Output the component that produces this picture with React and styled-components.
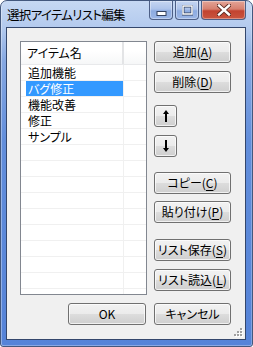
import React from 'react'
import styled, { createGlobalStyle } from 'styled-components'

const GlobalStyle = createGlobalStyle`
  html, body {
    margin: 0;
    padding: 0;
    background: #ffffff;
  }
  body {
    font-family: "Noto Sans CJK JP", "Liberation Sans", sans-serif;
    font-feature-settings: "palt";
  }
`

const Window = styled.div`
  box-sizing: border-box;
  width: 253px;
  height: 347px;
  display: flex;
  flex-direction: column;
  padding: 0 6px 6px 5px;
  border: 1px solid #43587e;
  border-radius: 7px 7px 3px 3px;
  background: linear-gradient(to bottom, #c6d8f3 0px, #b3caee 27px, #86a8e2 60px, #628edb 140px, #5583d8 100%);
  box-shadow: inset 1px 0 0 rgba(255,255,255,.35), inset -1px 0 0 rgba(255,255,255,.25), inset 0 -1px 0 rgba(255,255,255,.3);
  overflow: hidden;
`

const TitleBar = styled.div`
  height: 27px;
  display: flex;
  align-items: flex-start;
  justify-content: space-between;
`

const Title = styled.div`
  padding: 5px 0 0 1px;
  font-size: 12.5px;
  letter-spacing: -0.7px;
  line-height: 17px;
  color: #000;
  white-space: nowrap;
`

const Caption = styled.div`
  display: flex;
  align-items: flex-start;
  gap: 2px;
`

const CapButton = styled.div`
  box-sizing: border-box;
  width: ${p => p.$w}px;
  height: 19px;
  display: flex;
  align-items: center;
  justify-content: center;
  border: 1px solid #4d5f86;
  border-top: none;
  border-radius: 0 0 4px 4px;
  background: ${p => p.$close
    ? 'linear-gradient(to bottom, #e3a497 0%, #d6806f 45%, #c24330 55%, #c9553f 100%)'
    : 'linear-gradient(to bottom, #c6d6f1 0%, #adc3ea 45%, #8dabe0 55%, #9bb6e6 100%)'};
  box-shadow: inset 0 0 0 1px rgba(255,255,255,.35);
`

const Client = styled.div`
  position: relative;
  flex: 1;
  box-sizing: border-box;
  border: 1px solid #34476c;
  background: #f0f0f0;
  padding: 13px 14px 14px 13px;
  display: flex;
  flex-direction: column;
  gap: 8px;
`

const Main = styled.div`
  display: flex;
  gap: 7px;
  height: 254px;
`

const ListView = styled.div`
  box-sizing: border-box;
  width: 127px;
  height: 100%;
  border: 1px solid #828790;
  background: #fff;
  overflow: hidden;
`

const Header = styled.div`
  box-sizing: border-box;
  height: 23px;
  display: flex;
  background: linear-gradient(to bottom, #ffffff 0%, #ffffff 40%, #f6f7f8 100%);
  border-bottom: 1px solid #e8e9eb;
`

const HeadCell = styled.div`
  box-sizing: border-box;
  width: ${p => p.$w ? `${p.$w}px` : 'auto'};
  flex: ${p => p.$w ? 'none' : 1};
  padding-left: 6px;
  font-size: 12px;
  line-height: 22px;
  color: #000;
  border-right: ${p => p.$w ? '2px solid #e3e4e6' : 'none'};
`

const Row = styled.div`
  box-sizing: border-box;
  height: 16px;
  display: flex;
  border-bottom: 1px solid #f0f0f0;
`

const Cell = styled.div`
  box-sizing: border-box;
  width: 103px;
  padding-left: 5px;
  border-right: 1px solid #f0f0f0;
`

const Label = styled.div`
  height: 15px;
  padding-left: 2px;
  font-size: 12px;
  line-height: 15px;
  white-space: nowrap;
  overflow: hidden;
  color: ${p => p.$selected ? '#fff' : '#000'};
  background: ${p => p.$selected ? '#3399ff' : 'transparent'};
`

const Side = styled.div`
  display: flex;
  flex-direction: column;
  width: 77px;
`

const Button = styled.button`
  box-sizing: border-box;
  width: ${p => p.$w || 77}px;
  height: 22px;
  margin-top: ${p => p.$mt || 0}px;
  padding: 0;
  display: flex;
  align-items: center;
  justify-content: center;
  border: 1px solid #707070;
  border-radius: 3px;
  background: linear-gradient(to bottom, #f2f2f2 0%, #ebebeb 50%, #dddddd 50%, #cfcfcf 100%);
  box-shadow: inset 0 0 0 1px rgba(255,255,255,.7);
  font-family: "Noto Sans CJK JP", "Liberation Sans", sans-serif;
  font-feature-settings: "palt";
  font-size: 12px;
  line-height: 18px;
  color: #000;
  white-space: nowrap;
  u {
    text-decoration-thickness: 1px;
    text-underline-offset: 2px;
  }
`

const Footer = styled.div`
  display: flex;
  justify-content: flex-end;
  gap: 8px;
`

const Grip = styled.svg`
  position: absolute;
  right: 2px;
  bottom: 2px;
`

const items = ['追加機能', 'バグ修正', '機能改善', '修正', 'サンプル']
const rows = [...items, ...Array(10).fill('')]

const ArrowUp = () => (
  <svg width="6" height="12" viewBox="0 0 6 12">
    <polygon points="3,0 6,4 4,4 4,12 2,12 2,4 0,4" fill="#000" />
  </svg>
)

const ArrowDown = () => (
  <svg width="6" height="12" viewBox="0 0 6 12">
    <polygon points="2,0 4,0 4,8 6,8 3,12 0,8 2,8" fill="#000" />
  </svg>
)

const App = () => (
  <>
    <GlobalStyle />
    <Window>
      <TitleBar>
        <Title>選択アイテムリスト編集</Title>
        <Caption>
          <CapButton $w={24}>
            <svg width="11" height="13" viewBox="0 0 11 13">
              <rect x="1" y="7.5" width="9" height="4" fill="#fff" stroke="#33415f" strokeWidth="1" />
            </svg>
          </CapButton>
          <CapButton $w={24}>
            <svg width="11" height="11" viewBox="0 0 11 11">
              <rect x="1" y="1" width="9" height="8" fill="none" stroke="#33415f" strokeWidth="3" />
              <rect x="1" y="1" width="9" height="8" fill="none" stroke="#fff" strokeWidth="1.5" />
            </svg>
          </CapButton>
          <CapButton $w={45} $close>
            <svg width="14" height="12" viewBox="0 0 14 12">
              <path d="M2 1.5 L12 10.5 M12 1.5 L2 10.5" stroke="#5a2a22" strokeWidth="4.2" strokeLinecap="square" />
              <path d="M2 1.5 L12 10.5 M12 1.5 L2 10.5" stroke="#fff" strokeWidth="2.4" strokeLinecap="square" />
            </svg>
          </CapButton>
        </Caption>
      </TitleBar>
      <Client>
        <Main>
          <ListView>
            <Header>
              <HeadCell $w={103}>アイテム名</HeadCell>
              <HeadCell />
            </Header>
            {rows.map((text, i) => (
              <Row key={i}>
                <Cell>
                  <Label $selected={i === 1}>{text}</Label>
                </Cell>
              </Row>
            ))}
          </ListView>
          <Side>
            <Button>追加(<u>A</u>)</Button>
            <Button $mt={8}>削除(<u>D</u>)</Button>
            <Button $w={23} $mt={12}><ArrowUp /></Button>
            <Button $w={23} $mt={8}><ArrowDown /></Button>
            <Button $mt={15}>コピー(<u>C</u>)</Button>
            <Button $mt={7}>貼り付け(<u>P</u>)</Button>
            <Button $mt={16}>リスト保存(<u>S</u>)</Button>
            <Button $mt={8}>リスト読込(<u>L</u>)</Button>
          </Side>
        </Main>
        <Footer>
          <Button $w={78}>OK</Button>
          <Button>キャンセル</Button>
        </Footer>
        <Grip width="9" height="9" viewBox="0 0 9 9">
          {[[6, 0], [6, 3], [3, 3], [6, 6], [3, 6], [0, 6]].map(([x, y], i) => (
            <g key={i}>
              <rect x={x + 1} y={y + 1} width="2" height="2" fill="#fff" />
              <rect x={x} y={y} width="2" height="2" fill="#a0a0a0" />
            </g>
          ))}
        </Grip>
      </Client>
    </Window>
  </>
)

export default App
